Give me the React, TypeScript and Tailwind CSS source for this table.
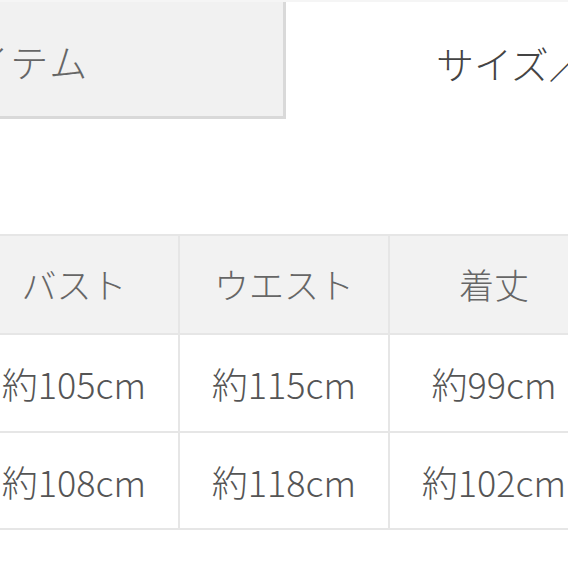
import React from "react";

const font = { fontFamily: '"Noto Sans CJK JP", "Noto Sans", sans-serif' };

export default function App() {
  const headers = ["バスト", "ウエスト", "着丈"];
  const rows = [
    ["約105cm", "約115cm", "約99cm"],
    ["約108cm", "約118cm", "約102cm"],
  ];
  return (
    <div className="w-[568px] h-[568px] overflow-hidden bg-white text-[#555] font-light" style={font}>
      <div className="h-[2px] bg-[#f5f5f5]" />
      <div className="flex h-[117px]">
        <div className="ml-[-60px] w-[346px] shrink-0 bg-[#f1f1f1] border-r-[3px] border-b-[3px] border-[#d9d9d9] flex items-center text-[38px] text-[#666] whitespace-nowrap overflow-hidden">
          <span className="ml-[-7px] pt-[3px] tracking-[2px]">アイテム</span>
        </div>
        <div className="flex-1 flex items-center pl-[150px] pt-[3px] text-[38px] text-[#444] whitespace-nowrap overflow-hidden">
          サイズ／カラー
        </div>
      </div>
      <div className="mt-[115px] ml-[-30px] w-[840px] border-t-2 border-[#e6e6e6]">
        <div className="flex h-[99px] bg-[#f2f2f2] border-b-2 border-[#e6e6e6]">
          {headers.map((h, i) => (
            <div key={i} className="w-[210px] shrink-0 border-r-2 border-[#e6e6e6] flex items-center justify-center text-[35px] text-[#666] whitespace-nowrap">
              {h}
            </div>
          ))}
          <div className="w-[210px] shrink-0" />
        </div>
        {rows.map((r, ri) => (
          <div key={ri} className={`flex ${ri === 0 ? "h-[98px]" : "h-[97px]"} border-b-2 border-[#e6e6e6]`}>
            {r.map((c, ci) => (
              <div key={ci} className="w-[210px] shrink-0 border-r-2 border-[#e6e6e6] flex items-center justify-center text-[36px] text-[#555] whitespace-nowrap">
                {c}
              </div>
            ))}
            <div className="w-[210px] shrink-0" />
          </div>
        ))}
      </div>
    </div>
  );
}
